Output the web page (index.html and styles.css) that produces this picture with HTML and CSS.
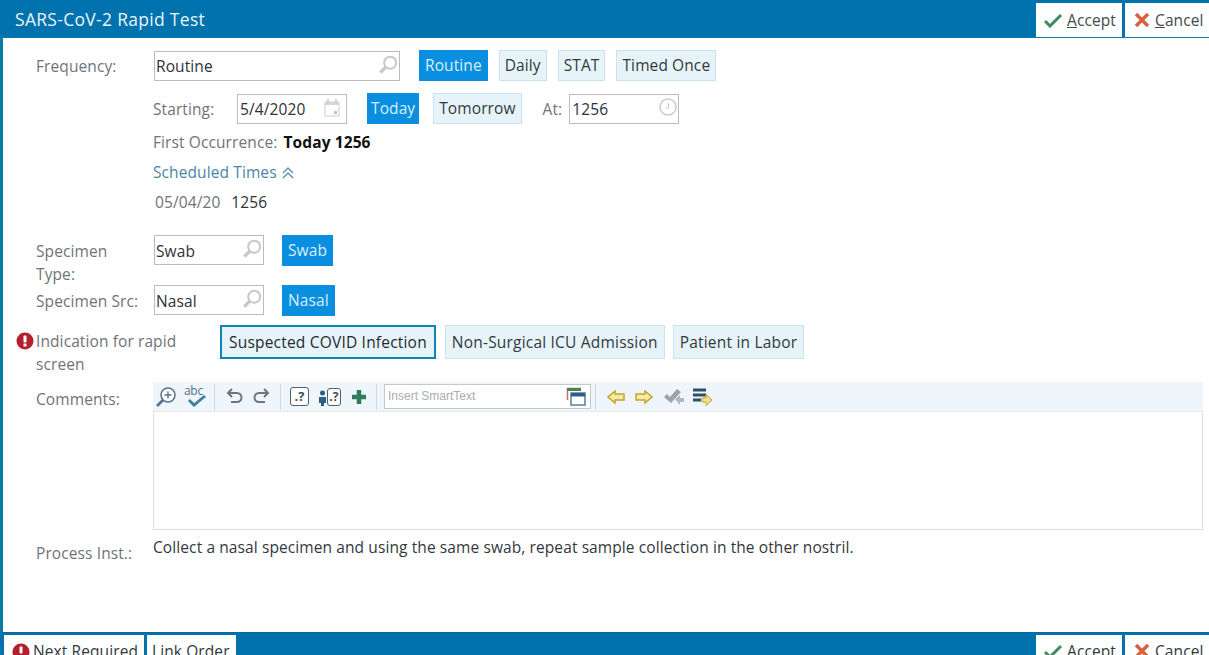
FILE: index.html
```html
<!doctype html>
<html lang="en">
<head>
    <meta charset="UTF-8">
    <title>SARS-CoV-2 Rapid Test</title>
    <link rel="stylesheet" href="styles.css">
</head>
<body>
<div class="window">
    <div class="titlebar">
        <div class="title">SARS-CoV-2 Rapid Test</div>
        <div class="bar-btn accept">
            <svg width="18" height="16" viewBox="0 0 18 16"><path d="M1 9l5 5L17 3" fill="none" stroke="#3f8a5e" stroke-width="3"/></svg>
            <span><u>A</u>ccept</span>
        </div>
        <div class="bar-btn">
            <svg width="16" height="16" viewBox="0 0 16 16"><path d="M2 2l12 12M14 2L2 14" fill="none" stroke="#d9603c" stroke-width="3.4"/></svg>
            <span><u>C</u>ancel</span>
        </div>
    </div>

    <div class="form">
        <!-- frequency -->
        <div class="row freq-row">
            <div class="label">Frequency:</div>
            <div class="field">
                <div class="line">
                    <div class="input w-freq">Routine
                        <svg class="search" width="22" height="22" viewBox="0 0 20 20"><circle cx="12" cy="8" r="5.5" fill="none" stroke="#c4c8cb" stroke-width="1.8"/><path d="M8 12l-5 5" stroke="#c4c8cb" stroke-width="3"/></svg>
                    </div>
                    <div class="btn on ml-freq">Routine</div>
                    <div class="btn">Daily</div>
                    <div class="btn">STAT</div>
                    <div class="btn">Timed Once</div>
                </div>
                <div class="line start-line">
                    <span class="muted w-start">Starting:</span>
                    <div class="input w-date">5/4/2020
                        <svg class="cal" width="18" height="20" viewBox="0 0 18 20"><rect x="2" y="4" width="14" height="14" fill="#fff" stroke="#c9cdd0"/><rect x="2" y="4" width="14" height="3" fill="#d5d8da"/><path d="M5 1v4M13 1v4" stroke="#c4c8cb" stroke-width="1.5"/><rect x="11" y="13" width="3" height="3" fill="#bfc4c8"/></svg>
                    </div>
                    <div class="btn on today">Today</div>
                    <div class="btn">Tomorrow</div>
                    <span class="muted at">At:</span>
                    <div class="input w-time">1256
                        <svg class="search" width="20" height="20" viewBox="0 0 20 20"><circle cx="10" cy="10" r="8" fill="none" stroke="#c9cdd0" stroke-width="1.5"/><path d="M10.500 6v5H8" fill="none" stroke="#c4c8cb"/></svg>
                    </div>
                </div>
                <div class="text-line occur"><span class="muted">First Occurrence:</span> <b>Today 1256</b></div>
                <div class="text-line sched">Scheduled Times
                    <svg width="14" height="14" viewBox="0 0 14 14"><path d="M2 7l5-5 5 5M2 12l5-5 5 5" fill="none" stroke="#5d8fa8" stroke-width="1.4"/></svg>
                </div>
                <div class="text-line times"><span class="muted">05/04/20</span><span class="time">1256</span></div>
            </div>
        </div>

        <!-- specimen -->
        <div class="row type-row">
            <div class="label two-line">Specimen Type:</div>
            <div class="line">
                <div class="input w-spec">Swab
                    <svg class="search" width="22" height="22" viewBox="0 0 20 20"><circle cx="12" cy="8" r="5.500" fill="none" stroke="#c4c8cb" stroke-width="1.8"/><path d="M8 12l-5 5" stroke="#c4c8cb" stroke-width="3"/></svg>
                </div>
                <div class="btn on ml-spec">Swab</div>
            </div>
        </div>
        <div class="row src-row">
            <div class="label">Specimen Src:</div>
            <div class="line">
                <div class="input w-spec">Nasal
                    <svg class="search" width="22" height="22" viewBox="0 0 20 20"><circle cx="12" cy="8" r="5.500" fill="none" stroke="#c4c8cb" stroke-width="1.8"/><path d="M8 12l-5 5" stroke="#c4c8cb" stroke-width="3"/></svg>
                </div>
                <div class="btn on ml-spec">Nasal</div>
            </div>
        </div>

        <!-- indication -->
        <div class="row ind-row">
            <div class="label ind-label">
                <svg class="req" width="18" height="18" viewBox="0 0 18 18"><circle cx="9" cy="9" r="8.500" fill="#b3202c"/><rect x="7.500" y="3.500" width="3" height="7" rx="1" fill="#fff"/><rect x="7.500" y="11.500" width="3" height="3" fill="#fff"/></svg>
                Indication for rapid screen
            </div>
            <div class="line ind-btns">
                <div class="btn focus">Suspected COVID Infection</div>
                <div class="btn">Non-Surgical ICU Admission</div>
                <div class="btn">Patient in Labor</div>
            </div>
        </div>

        <!-- comments -->
        <div class="row com-row">
            <div class="label com-label">Comments:</div>
            <div class="editor">
                <div class="toolbar">
                    <svg class="tool" width="24" height="24" viewBox="0 0 24 24"><circle cx="14" cy="10" r="7" fill="#fff" stroke="#54708a" stroke-width="1.500"/><path d="M14 6.500v7M10.500 10h7" stroke="#54708a" stroke-width="1.300"/><path d="M9 15l-6 6" stroke="#54708a" stroke-width="2.600"/></svg>
                    <div class="abc">abc<svg width="20" height="12" viewBox="0 0 20 12"><path d="M2 5l5 5L18 1" fill="none" stroke="#3f7f9c" stroke-width="2.800"/></svg></div>
                    <i class="sep"></i>
                    <svg class="tool undo" width="20" height="20" viewBox="0 0 20 20"><path d="M7 2L3 6l4 4M3 6h9a4.500 4.500 0 0 1 0 9H6" fill="none" stroke="#6f7478" stroke-width="2"/></svg>
                    <svg class="tool redo" width="20" height="20" viewBox="0 0 20 20"><path d="M13 2l4 4-4 4M17 6H8a4.500 4.500 0 0 0 0 9h6" fill="none" stroke="#6f7478" stroke-width="2"/></svg>
                    <i class="sep"></i>
                    <div class="qbox">.?</div>
                    <div class="qperson">
                        <svg width="9" height="20" viewBox="0 0 9 20"><circle cx="4.500" cy="6" r="2.500" fill="#2f5f80"/><path d="M1 10h7v6H6v3H3v-3H1z" fill="#2f5f80"/></svg>
                        <div class="qbox small">.?</div>
                    </div>
                    <svg class="tool plus" width="16" height="16" viewBox="0 0 16 16"><path d="M8 1v14M1 8h14" stroke="#2f7d58" stroke-width="4.500"/></svg>
                    <i class="sep"></i>
                    <div class="smart">Insert SmartText
                        <svg class="smart-ic" width="20" height="20" viewBox="0 0 20 20"><path d="M1.500 14V2.500h13" fill="#fff" stroke="#c9734a" stroke-width="1.500"/><rect x="1" y="2" width="14" height="3" fill="#4d7f5f"/><rect x="5" y="7" width="14" height="12" fill="#fff" stroke="#557d9c" stroke-width="1.500"/><rect x="5" y="7" width="14" height="3.500" fill="#2f5f80"/></svg>
                    </div>
                    <i class="sep sep-smart"></i>
                    <svg class="arrow first-arrow" width="18" height="14" viewBox="0 0 18 14"><path d="M8 1L1 7l7 6V10h9V4H8z" fill="#f4eaa8" stroke="#c8a42e" stroke-width="1.500"/></svg>
                    <svg class="arrow" width="18" height="14" viewBox="0 0 18 14"><path d="M10 1l7 6-7 6V10H1V4h9z" fill="#f4eaa8" stroke="#c8a42e" stroke-width="1.500"/></svg>
                    <svg class="arrow jump" width="22" height="20" viewBox="0 0 22 20"><path d="M1 10l3-3 3 3 7-8 4 3-10 11z" fill="#9ea2a5"/><path d="M12 12l5-4v3h4v4h-4v3z" fill="#b4b8ba"/></svg>
                    <svg width="21" height="20" viewBox="0 0 21 20"><path d="M1 3h13M1 8h13M1 13h8" stroke="#2f4f68" stroke-width="3"/><path d="M10 11h4V7.500l6 5.500-6 5.500V15h-4z" fill="#f2e08a" stroke="#c8a42e"/></svg>
                </div>
                <div class="textarea"></div>
            </div>
        </div>

        <!-- process instructions -->
        <div class="row proc-row">
            <div class="label proc-label">Process Inst.:</div>
            <div class="proc-text">Collect a nasal specimen and using the same swab, repeat sample collection in the other nostril.</div>
        </div>
    </div>

    <div class="footer">
        <div class="foot-btn next">
            <svg width="18" height="18" viewBox="0 0 18 18"><circle cx="9" cy="9" r="8.500" fill="#b3202c"/><rect x="7.500" y="3.500" width="3" height="7" rx="1" fill="#fff"/></svg>
            <span>Next Required</span>
        </div>
        <div class="foot-btn link">Link Order</div>
        <div class="grow"></div>
        <div class="foot-btn accept">
            <svg width="18" height="16" viewBox="0 0 18 16"><path d="M1 9l5 5L17 3" fill="none" stroke="#3f8a5e" stroke-width="3"/></svg>
            <span>Accept</span>
        </div>
        <div class="foot-btn cancel">
            <svg width="16" height="16" viewBox="0 0 16 16"><path d="M2 2l12 12M14 2L2 14" fill="none" stroke="#d9603c" stroke-width="3.400"/></svg>
            <span>Cancel</span>
        </div>
    </div>
</div>
</body>
</html>
```

FILE: styles.css
```css
*{
    margin: 0;
    padding: 0;
    box-sizing: border-box;
}
html,body{
    height: 100%;
    overflow: hidden;
    background: #fff;
}
body{
    font-family: "Open Sans", "Noto Sans", sans-serif;
    font-size: 15.5px;
    letter-spacing: 0.1px;
    color: #2e3236;
}
.window{
    height: 672px;
    display: flex;
    flex-direction: column;
    border-left: 3px solid #0a7da6;
}
.titlebar{
    height: 38px;
    flex: none;
    background: #0072ae;
    border-bottom: 1px solid #0a7da6;
    display: flex;
    align-items: stretch;
    gap: 3px;
    padding: 3px 0 0 15px;
    margin-left: -3px;
}
.title{
    flex: 1;
    color: #eaf4fa;
    font-size: 17.5px;
    letter-spacing: 0.3px;
    line-height: 33px;
}
.bar-btn{
    width: 84px;
    background: #fdfefe;
    display: flex;
    align-items: center;
    gap: 5px;
    padding-left: 9px;
    color: #454a4e;
}
.bar-btn.accept{
    width: 86px;
    padding-left: 8px;
}
.form{
    flex: 1;
    padding-left: 33px;
    padding-right: 6px;
}
.row{
    display: flex;
}
.label{
    width: 117px;
    flex: none;
    color: #6f7477;
    line-height: 23px;
}
.field{
    flex: 1;
}
.line{
    display: flex;
    align-items: center;
}
.freq-row{
    padding-top: 12px;
}
.freq-row > .label{
    padding-top: 5px;
}
.input{
    position: relative;
    height: 30px;
    border: 1px solid #b9bcbe;
    background: #fff;
    line-height: 29px;
    padding-left: 1px;
    color: #2e3236;
}
.search{
    position: absolute;
    right: 0;
    top: 2px;
}
.cal{
    position: absolute;
    right: 5px;
    top: 3px;
}
.w-freq{
    width: 246px;
    margin-left: 1px;
}
.w-date{
    width: 110px;
    margin-right: 20px;
    padding-left: 2px;
}
.w-time{
    width: 110px;
    padding-left: 2px;
}
.w-spec{
    width: 110px;
    margin-left: 1px;
    line-height: 31px;
}
.btn{
    height: 31px;
    line-height: 29px;
    padding: 0 5px;
    background: #e6f4fa;
    border: 1px solid #cbe3ee;
    color: #33383c;
    margin-right: 11px;
    white-space: nowrap;
}
.btn.on{
    background: #0a8fe0;
    border-color: #0a8fe0;
    color: #d8eefb;
}
.btn.today{
    padding: 0 3px;
    margin-right: 14px;
}
.ml-freq{
    margin-left: 19px;
}
.ml-spec{
    margin-left: 18px;
}
.muted{
    color: #6f7477;
}
.start-line{
    margin-top: 12px;
}
.w-start{
    width: 84px;
}
.at{
    margin-left: 10px;
    margin-right: 7px;
}
.text-line{
    height: 30px;
    line-height: 30px;
}
.occur{
    margin-top: 3px;
}
.occur b{
    color: #111;
    margin-left: 2px;
}
.sched{
    color: #4b85a5;
}
.sched svg{
    vertical-align: -2px;
}
.times{
    padding-left: 2px;
}
.time{
    margin-left: 11px;
}
.type-row{
    margin-top: 18px;
}
.two-line{
    width: 90px;
    margin-right: 27px;
    padding-top: 5px;
    height: 50px;
}
.src-row .label{
    padding-top: 5px;
}
.type-row .line, .src-row .line{
    align-items: flex-start;
}
.ind-row{
    margin-top: 9px;
    height: 57px;
}
.ind-label{
    position: relative;
    width: 184px;
    padding: 5px 40px 0 0;
}
.req{
    position: absolute;
    left: -20px;
    top: 7px;
}
.ind-btns{
    align-items: flex-start;
    letter-spacing: 0.2px;
}
.ind-btns .btn{
    height: 34px;
    line-height: 32px;
    padding: 0 6px;
    margin-right: 8px;
}
.ind-btns .btn.focus{
    border: 2px solid #0d83bb;
    line-height: 30px;
    padding: 0 7px;
    margin-right: 9px;
    color: #25292c;
}
.com-row .label{
    padding-top: 6px;
}
.editor{
    flex: 1;
}
.toolbar{
    height: 29px;
    background: #eef6fb;
    display: flex;
    align-items: center;
    padding-left: 1px;
}
.tool{
    flex: none;
    margin-right: 6px;
}
.sep{
    width: 1px;
    height: 26px;
    background: #cfdbe2;
    margin: 0 6px 0 3px;
    flex: none;
}
.abc{
    position: relative;
    width: 24px;
    height: 26px;
    font-size: 12px;
    letter-spacing: -0.3px;
    line-height: 14px;
    color: #54708a;
    margin-right: 3px;
}
.abc svg{
    position: absolute;
    left: 3px;
    top: 11px;
}
.undo{
    margin-left: 4px;
}
.qbox{
    width: 19px;
    height: 19px;
    border: 1px solid #4d5e6c;
    border-radius: 3px;
    font-size: 13px;
    font-weight: 700;
    line-height: 16px;
    text-align: center;
    color: #3c4e5c;
    background: #fff;
    margin-left: 3px;
    margin-right: 9px;
}
.qperson{
    display: flex;
    align-items: center;
    margin-right: 10px;
}
.qbox.small{
    width: 14px;
    height: 18px;
    margin: 0;
    font-size: 12px;
}
.smart{
    position: relative;
    width: 207px;
    height: 25px;
    margin-left: 1px;
    border: 1px solid #c6c9cb;
    background: #fff;
    color: #a9adb0;
    font-family: "Liberation Sans", sans-serif;
    font-size: 12px;
    letter-spacing: 0;
    line-height: 23px;
    padding-left: 3px;
    flex: none;
}
.smart-ic{
    position: absolute;
    right: 4px;
    top: 1px;
}
.sep-smart{
    margin-left: 4px;
}
.arrow{
    flex: none;
    margin-right: 10px;
}
.first-arrow{
    margin-left: 5px;
}
.jump{
    margin-right: 7px;
}
.textarea{
    height: 119px;
    border: 1px solid #dbe0e3;
    border-top: 1px solid #e4e9ec;
    background: #fff;
}
.proc-row{
    margin-top: 6px;
}
.proc-label{
    padding-top: 6px;
}
.proc-text{
    line-height: 22px;
    color: #33383c;
}
.footer{
    height: 40px;
    flex: none;
    margin-left: -3px;
    background: #0072ae;
    border-top: 1px solid #0a6a96;
    display: flex;
    gap: 3px;
    padding: 2px 0 0 4px;
}
.foot-btn{
    background: #fdfefe;
    height: 34px;
    display: flex;
    align-items: flex-start;
    padding-top: 6px;
    line-height: 20px;
    color: #33383c;
    white-space: nowrap;
}
.foot-btn svg{
    flex: none;
    margin-top: 2px;
}
.next{
    width: 140px;
    padding-left: 8px;
    gap: 3px;
}
.link{
    width: 89px;
    padding-left: 5px;
}
.foot-btn.accept{
    width: 86px;
    padding-left: 8px;
    gap: 5px;
}
.foot-btn.cancel{
    width: 84px;
    padding-left: 9px;
    gap: 5px;
}
.grow{
    flex: 1;
}
```
